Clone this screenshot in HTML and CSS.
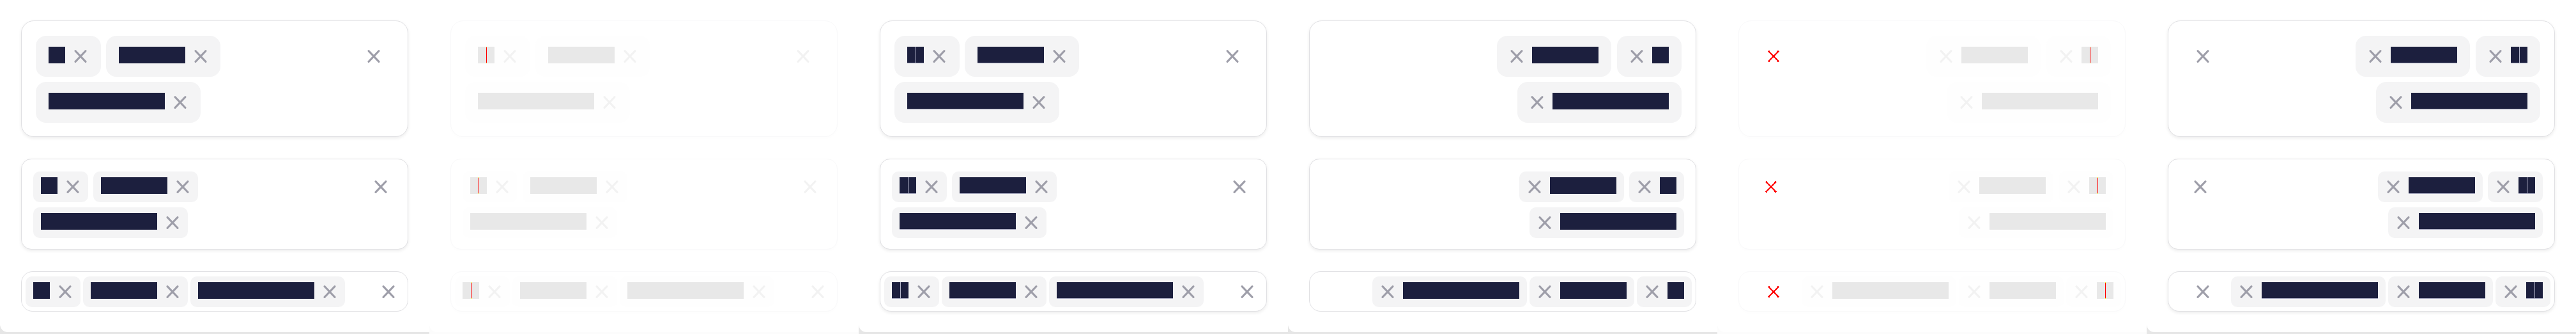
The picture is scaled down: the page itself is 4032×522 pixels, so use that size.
FILE: index.html
```html
<!DOCTYPE html>
<html lang="en">
<head>
<meta charset="utf-8">
<title>Tag input states</title>
<link rel="stylesheet" href="styles.css">
</head>
<body>
<main class="page">

  <!-- 1: LTR default -->
  <section class="col">
    <div class="card">
      <div class="field lg shadow">
        <div class="tags">
          <span class="tag"><span class="txt w1">A</span><svg class="x" viewBox="0 0 20 20"><use href="#ix"/></svg></span>
          <span class="tag"><span class="txt w4">Blue</span><svg class="x" viewBox="0 0 20 20"><use href="#ix"/></svg></span>
          <span class="tag"><span class="txt w7">Premium</span><svg class="x" viewBox="0 0 20 20"><use href="#ix"/></svg></span>
        </div>
        <span class="clear"><svg class="x" viewBox="0 0 20 20"><use href="#ix"/></svg></span>
      </div>
      <div class="field md shadow">
        <div class="tags">
          <span class="tag"><span class="txt w1">A</span><svg class="x" viewBox="0 0 20 20"><use href="#ix"/></svg></span>
          <span class="tag"><span class="txt w4">Blue</span><svg class="x" viewBox="0 0 20 20"><use href="#ix"/></svg></span>
          <span class="tag"><span class="txt w7">Premium</span><svg class="x" viewBox="0 0 20 20"><use href="#ix"/></svg></span>
        </div>
        <span class="clear"><svg class="x" viewBox="0 0 20 20"><use href="#ix"/></svg></span>
      </div>
      <div class="field sm">
        <div class="tags">
          <span class="tag"><span class="txt w1">A</span><svg class="x" viewBox="0 0 20 20"><use href="#ix"/></svg></span>
          <span class="tag"><span class="txt w4">Blue</span><svg class="x" viewBox="0 0 20 20"><use href="#ix"/></svg></span>
          <span class="tag"><span class="txt w7">Premium</span><svg class="x" viewBox="0 0 20 20"><use href="#ix"/></svg></span>
        </div>
        <span class="clear"><svg class="x" viewBox="0 0 20 20"><use href="#ix"/></svg></span>
      </div>
    </div>
  </section>

  <!-- 2: LTR diff -->
  <section class="col diff">
    <div class="card">
      <div class="field lg shadow">
        <div class="tags">
          <span class="tag"><span class="txt w1 mark">A</span><svg class="x" viewBox="0 0 20 20"><use href="#ix"/></svg></span>
          <span class="tag"><span class="txt w4">Blue</span><svg class="x" viewBox="0 0 20 20"><use href="#ix"/></svg></span>
          <span class="tag"><span class="txt w7">Premium</span><svg class="x" viewBox="0 0 20 20"><use href="#ix"/></svg></span>
        </div>
        <span class="clear"><svg class="x" viewBox="0 0 20 20"><use href="#ix"/></svg></span>
      </div>
      <div class="field md shadow">
        <div class="tags">
          <span class="tag"><span class="txt w1 mark">A</span><svg class="x" viewBox="0 0 20 20"><use href="#ix"/></svg></span>
          <span class="tag"><span class="txt w4">Blue</span><svg class="x" viewBox="0 0 20 20"><use href="#ix"/></svg></span>
          <span class="tag"><span class="txt w7">Premium</span><svg class="x" viewBox="0 0 20 20"><use href="#ix"/></svg></span>
        </div>
        <span class="clear"><svg class="x" viewBox="0 0 20 20"><use href="#ix"/></svg></span>
      </div>
      <div class="field sm shadow">
        <div class="tags">
          <span class="tag"><span class="txt w1 mark">A</span><svg class="x" viewBox="0 0 20 20"><use href="#ix"/></svg></span>
          <span class="tag"><span class="txt w4">Blue</span><svg class="x" viewBox="0 0 20 20"><use href="#ix"/></svg></span>
          <span class="tag"><span class="txt w7">Premium</span><svg class="x" viewBox="0 0 20 20"><use href="#ix"/></svg></span>
        </div>
        <span class="clear"><svg class="x" viewBox="0 0 20 20"><use href="#ix"/></svg></span>
      </div>
    </div>
  </section>

  <!-- 3: LTR alternate -->
  <section class="col alt">
    <div class="card">
      <div class="field lg shadow">
        <div class="tags">
          <span class="tag"><span class="txt w1 split">A</span><svg class="x" viewBox="0 0 20 20"><use href="#ix"/></svg></span>
          <span class="tag"><span class="txt w4">Blue</span><svg class="x" viewBox="0 0 20 20"><use href="#ix"/></svg></span>
          <span class="tag"><span class="txt w7">Premium</span><svg class="x" viewBox="0 0 20 20"><use href="#ix"/></svg></span>
        </div>
        <span class="clear"><svg class="x" viewBox="0 0 20 20"><use href="#ix"/></svg></span>
      </div>
      <div class="field md shadow">
        <div class="tags">
          <span class="tag"><span class="txt w1 split">A</span><svg class="x" viewBox="0 0 20 20"><use href="#ix"/></svg></span>
          <span class="tag"><span class="txt w4">Blue</span><svg class="x" viewBox="0 0 20 20"><use href="#ix"/></svg></span>
          <span class="tag"><span class="txt w7">Premium</span><svg class="x" viewBox="0 0 20 20"><use href="#ix"/></svg></span>
        </div>
        <span class="clear"><svg class="x" viewBox="0 0 20 20"><use href="#ix"/></svg></span>
      </div>
      <div class="field sm shadow">
        <div class="tags">
          <span class="tag"><span class="txt w1 split">A</span><svg class="x" viewBox="0 0 20 20"><use href="#ix"/></svg></span>
          <span class="tag"><span class="txt w4">Blue</span><svg class="x" viewBox="0 0 20 20"><use href="#ix"/></svg></span>
          <span class="tag"><span class="txt w7">Premium</span><svg class="x" viewBox="0 0 20 20"><use href="#ix"/></svg></span>
        </div>
        <span class="clear"><svg class="x" viewBox="0 0 20 20"><use href="#ix"/></svg></span>
      </div>
    </div>
  </section>

  <!-- 4: RTL default (clear hidden) -->
  <section class="col">
    <div class="card">
      <div class="field lg shadow" dir="rtl">
        <div class="tags">
          <span class="tag"><span class="txt w1">A</span><svg class="x" viewBox="0 0 20 20"><use href="#ix"/></svg></span>
          <span class="tag"><span class="txt w4">Blue</span><svg class="x" viewBox="0 0 20 20"><use href="#ix"/></svg></span>
          <span class="tag"><span class="txt w7">Premium</span><svg class="x" viewBox="0 0 20 20"><use href="#ix"/></svg></span>
        </div>
        <span class="clear hidden"><svg class="x" viewBox="0 0 20 20"><use href="#ix"/></svg></span>
      </div>
      <div class="field md shadow" dir="rtl">
        <div class="tags">
          <span class="tag"><span class="txt w1">A</span><svg class="x" viewBox="0 0 20 20"><use href="#ix"/></svg></span>
          <span class="tag"><span class="txt w4">Blue</span><svg class="x" viewBox="0 0 20 20"><use href="#ix"/></svg></span>
          <span class="tag"><span class="txt w7">Premium</span><svg class="x" viewBox="0 0 20 20"><use href="#ix"/></svg></span>
        </div>
        <span class="clear hidden"><svg class="x" viewBox="0 0 20 20"><use href="#ix"/></svg></span>
      </div>
      <div class="field sm" dir="rtl">
        <div class="tags">
          <span class="tag"><span class="txt w1">A</span><svg class="x" viewBox="0 0 20 20"><use href="#ix"/></svg></span>
          <span class="tag"><span class="txt w4">Blue</span><svg class="x" viewBox="0 0 20 20"><use href="#ix"/></svg></span>
          <span class="tag"><span class="txt w7">Premium</span><svg class="x" viewBox="0 0 20 20"><use href="#ix"/></svg></span>
        </div>
        <span class="clear hidden"><svg class="x" viewBox="0 0 20 20"><use href="#ix"/></svg></span>
      </div>
    </div>
  </section>

  <!-- 5: RTL diff -->
  <section class="col diff">
    <div class="card">
      <div class="field lg shadow" dir="rtl">
        <div class="tags">
          <span class="tag"><span class="txt w1 mark">A</span><svg class="x" viewBox="0 0 20 20"><use href="#ix"/></svg></span>
          <span class="tag"><span class="txt w4">Blue</span><svg class="x" viewBox="0 0 20 20"><use href="#ix"/></svg></span>
          <span class="tag"><span class="txt w7">Premium</span><svg class="x" viewBox="0 0 20 20"><use href="#ix"/></svg></span>
        </div>
        <span class="clear red"><svg class="x" viewBox="0 0 20 20"><use href="#ix"/></svg></span>
      </div>
      <div class="field md shadow" dir="rtl">
        <div class="tags">
          <span class="tag"><span class="txt w1 mark">A</span><svg class="x" viewBox="0 0 20 20"><use href="#ix"/></svg></span>
          <span class="tag"><span class="txt w4">Blue</span><svg class="x" viewBox="0 0 20 20"><use href="#ix"/></svg></span>
          <span class="tag"><span class="txt w7">Premium</span><svg class="x" viewBox="0 0 20 20"><use href="#ix"/></svg></span>
        </div>
        <span class="clear red"><svg class="x" viewBox="0 0 20 20"><use href="#ix"/></svg></span>
      </div>
      <div class="field sm shadow" dir="rtl">
        <div class="tags">
          <span class="tag"><span class="txt w1 mark">A</span><svg class="x" viewBox="0 0 20 20"><use href="#ix"/></svg></span>
          <span class="tag"><span class="txt w4">Blue</span><svg class="x" viewBox="0 0 20 20"><use href="#ix"/></svg></span>
          <span class="tag"><span class="txt w7">Premium</span><svg class="x" viewBox="0 0 20 20"><use href="#ix"/></svg></span>
        </div>
        <span class="clear red"><svg class="x" viewBox="0 0 20 20"><use href="#ix"/></svg></span>
      </div>
    </div>
  </section>

  <!-- 6: RTL alternate -->
  <section class="col alt">
    <div class="card">
      <div class="field lg shadow" dir="rtl">
        <div class="tags">
          <span class="tag"><span class="txt w1 split">A</span><svg class="x" viewBox="0 0 20 20"><use href="#ix"/></svg></span>
          <span class="tag"><span class="txt w4">Blue</span><svg class="x" viewBox="0 0 20 20"><use href="#ix"/></svg></span>
          <span class="tag"><span class="txt w7">Premium</span><svg class="x" viewBox="0 0 20 20"><use href="#ix"/></svg></span>
        </div>
        <span class="clear"><svg class="x" viewBox="0 0 20 20"><use href="#ix"/></svg></span>
      </div>
      <div class="field md shadow" dir="rtl">
        <div class="tags">
          <span class="tag"><span class="txt w1 split">A</span><svg class="x" viewBox="0 0 20 20"><use href="#ix"/></svg></span>
          <span class="tag"><span class="txt w4">Blue</span><svg class="x" viewBox="0 0 20 20"><use href="#ix"/></svg></span>
          <span class="tag"><span class="txt w7">Premium</span><svg class="x" viewBox="0 0 20 20"><use href="#ix"/></svg></span>
        </div>
        <span class="clear"><svg class="x" viewBox="0 0 20 20"><use href="#ix"/></svg></span>
      </div>
      <div class="field sm shadow" dir="rtl">
        <div class="tags">
          <span class="tag"><span class="txt w1 split">A</span><svg class="x" viewBox="0 0 20 20"><use href="#ix"/></svg></span>
          <span class="tag"><span class="txt w4">Blue</span><svg class="x" viewBox="0 0 20 20"><use href="#ix"/></svg></span>
          <span class="tag"><span class="txt w7">Premium</span><svg class="x" viewBox="0 0 20 20"><use href="#ix"/></svg></span>
        </div>
        <span class="clear"><svg class="x" viewBox="0 0 20 20"><use href="#ix"/></svg></span>
      </div>
    </div>
  </section>

</main>
<svg class="defs" width="0" height="0" aria-hidden="true">
  <symbol id="ix" viewBox="0 0 20 20"><path d="M2 1.6L18 18.4M18 1.6L2 18.4"/></symbol>
</svg>
</body>
</html>
```
FILE: styles.css
```css
html, body {
  margin: 0;
  padding: 0;
  background: #ffffff;
  font-family: "Liberation Sans", Arial, sans-serif;
}

.page {
  display: flex;
  width: 4032px;
  height: 522px;
  overflow: hidden;
}

.col {
  flex: 0 0 672px;
  height: 522px;
  background: #e6e6e6;
}

.card {
  height: 519px;
  box-sizing: border-box;
  background: #ffffff;
  border-bottom-left-radius: 12px;
  padding: 32px 0 0 33px;
  display: flex;
  flex-direction: column;
  gap: 34px;
}

.field {
  width: 606px;
  flex: none;
  box-sizing: border-box;
  border: 1px solid #e0e0e3;
  background: #ffffff;
  display: flex;
  align-items: flex-start;
}

.shadow {
  box-shadow: 0 2px 5px rgba(0, 0, 0, 0.08);
}

.lg {
  height: 182px;
  padding-top: 23px;
  padding-inline-start: 22px;
  border-radius: 20px;
}

.md {
  height: 142px;
  padding-top: 18.7px;
  padding-inline-start: 18px;
  border-radius: 16px;
}

.sm {
  height: 63px;
  padding-top: 6.7px;
  padding-inline-start: 6px;
  border-radius: 18px;
}

.tags {
  flex: 1 1 auto;
  min-width: 0;
  display: flex;
  flex-wrap: wrap;
  align-content: flex-start;
}

.lg .tags { gap: 8.7px 8.2px; }
.md .tags { gap: 8px 8.5px; }
.sm .tags { gap: 8px 4.3px; }

.tag {
  display: flex;
  align-items: center;
  flex: none;
  background: #f4f4f5;
}

.lg .tag {
  height: 63.5px;
  padding-inline-start: 20px;
  padding-inline-end: 21.5px;
  gap: 14px;
  border-radius: 16px;
}

.md .tag,
.sm .tag {
  height: 48px;
  padding-inline-start: 12px;
  padding-inline-end: 13.7px;
  gap: 14px;
  border-radius: 10px;
}

.txt {
  position: relative;
  display: block;
  flex: none;
  height: 26px;
  margin-bottom: 3.5px;
  background: #1c1f3e;
  color: #1c1f3e;
  font-size: 12px;
  line-height: 26px;
  overflow: hidden;
  white-space: nowrap;
}

.w1 { width: 26px; }
.w4 { width: 104px; }
.w7 { width: 182px; }

.x {
  display: block;
  flex: none;
  width: 20px;
  height: 20px;
  color: #9e9ea9;
  fill: none;
  stroke: currentColor;
  stroke-width: 3;
  stroke-linecap: round;
}

.clear {
  display: block;
  flex: none;
}

.lg .clear { margin-top: 21.75px; margin-inline-start: 30px; margin-inline-end: 43px; }
.md .clear { margin-top: 14px; margin-inline-start: 30px; margin-inline-end: 32px; }
.sm .clear { margin-top: 14.5px; margin-inline-start: 26px; margin-inline-end: 20px; }

.lg[dir="rtl"] .clear { margin-inline-end: 43.6px; }
.md[dir="rtl"] .clear { margin-inline-end: 40px; }
.sm[dir="rtl"] .clear { margin-inline-end: 43.6px; }

.hidden { visibility: hidden; }

/* alternate rendering */
.alt .txt {
  box-shadow: inset 0 -1px 0 #a7a9c0;
}

.split::after {
  content: "";
  position: absolute;
  left: 13px;
  top: 0;
  bottom: 0;
  width: 1px;
  background: #b3b5ca;
}

/* diff rendering */
.col.diff { background: #fcfcfc; }

.diff .field {
  border-color: #f9f9fa;
  box-shadow: 0 2px 5px rgba(0, 0, 0, 0.012);
}

.diff .tag { background: #fefefe; }

.diff .txt {
  background: #e8e8e8;
  color: #e8e8e8;
}

.diff .x { color: #f2f2f2; }

.mark::after {
  content: "";
  position: absolute;
  left: 13px;
  top: 0;
  bottom: 0;
  width: 1px;
  background: linear-gradient(#ffff00 0 1px, #ff0000 1px calc(100% - 1px), #ffff00 calc(100% - 1px));
}

.diff .red .x {
  color: #ff0000;
  stroke-width: 2.4;
  stroke-linecap: butt;
  shape-rendering: crispEdges;
}

.defs {
  display: block;
  width: 0;
  height: 0;
  overflow: hidden;
}
```
